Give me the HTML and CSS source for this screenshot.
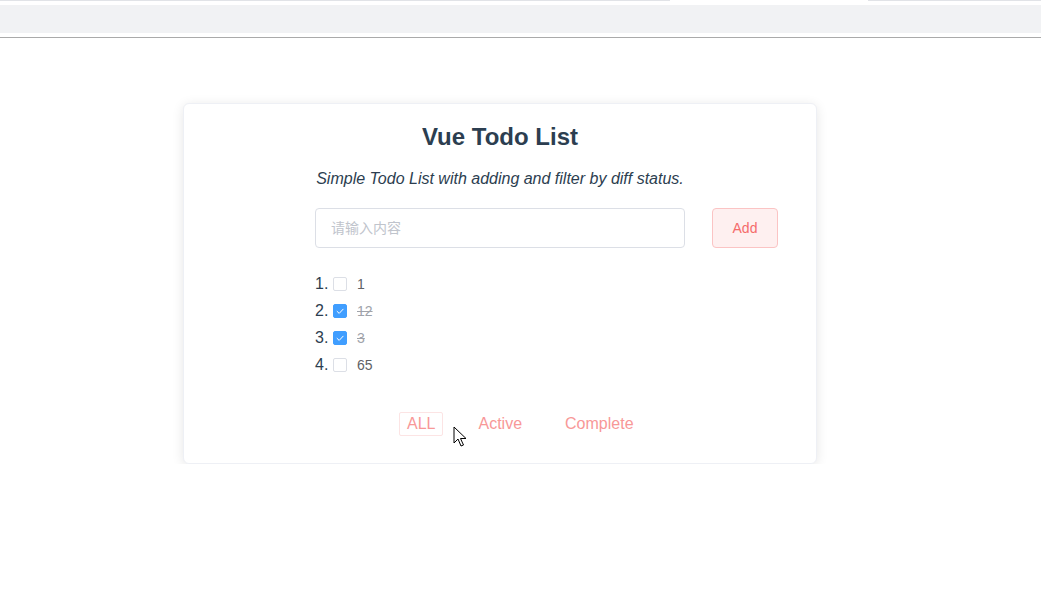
FILE: index.html
```html
<!DOCTYPE html>
<html lang="en">
<head>
<meta charset="utf-8">
<title>Vue Todo List</title>
<link rel="stylesheet" href="styles.css">
</head>
<body>
<div class="chrome">
  <div class="tabs"><div class="tab-gap"></div></div>
  <div class="bar"></div>
  <div class="sep"></div>
</div>
<main class="page">
  <section class="card">
    <h2 class="title">Vue Todo List</h2>
    <p class="subtitle">Simple Todo List with adding and filter by diff status.</p>
    <div class="inner">
      <div class="add-row">
        <input class="todo-input" type="text" placeholder="请输入内容">
        <button class="add-btn">Add</button>
      </div>
      <ol class="todos">
        <li class="todo"><span class="num">1.</span><span class="box"></span><span class="label">1</span></li>
        <li class="todo done"><span class="num">2.</span><span class="box checked"><svg viewBox="0 0 14 14" width="14" height="14"><path d="M3.8 7.1l2.4 2.3L10.4 4.9" fill="none" stroke="#fff" stroke-width="1"/></svg></span><span class="label">12</span></li>
        <li class="todo done"><span class="num">3.</span><span class="box checked"><svg viewBox="0 0 14 14" width="14" height="14"><path d="M3.8 7.1l2.4 2.3L10.4 4.9" fill="none" stroke="#fff" stroke-width="1"/></svg></span><span class="label">3</span></li>
        <li class="todo"><span class="num">4.</span><span class="box"></span><span class="label">65</span></li>
      </ol>
      <div class="filters">
        <button class="filter active-filter">ALL</button>
        <button class="filter">Active</button>
        <button class="filter">Complete</button>
        <svg class="cursor" width="14" height="22" viewBox="0 0 14 22"><path d="M1 1v16l4-4 3 7 2.5-1-3-6.5h5.5z" fill="#fff" stroke="#000" stroke-width="1" stroke-linejoin="round"/></svg>
      </div>
    </div>
  </section>
</main>
</body>
</html>
```

FILE: styles.css
```css
html, body {
  margin: 0;
  padding: 0;
  background: #fff;
  font-family: "Liberation Sans", Arial, "Noto Sans CJK SC", sans-serif;
}

.chrome .tabs {
  height: 5px;
  background: #fff;
  position: relative;
}
.chrome .tabs::before {
  content: "";
  display: block;
  height: 1px;
  background: #e1e3e7;
}
.chrome .tab-gap {
  position: absolute;
  top: 0;
  left: 670px;
  width: 198px;
  height: 2px;
  background: #fff;
}
.chrome .bar {
  height: 28px;
  background: #f1f2f4;
}
.chrome .sep {
  height: 4px;
  background: #fff;
  border-bottom: 1px solid #aaaaaa;
}

.page {
  padding-top: 65px;
  display: flex;
  justify-content: center;
}

.card {
  width: 632px;
  margin-left: -41px;
  background: #fff;
  border: 1px solid #eef0f5;
  border-radius: 6px;
  box-shadow: 0 2px 12px 0 rgba(0, 0, 0, 0.1);
  padding: 19px 0 27px;
  box-sizing: content-box;
  color: #2c3e50;
}

.title {
  margin: 0;
  text-align: center;
  font-size: 24px;
  line-height: 28px;
  font-weight: bold;
}

.subtitle {
  margin: 19px 0 0;
  text-align: center;
  font-size: 16px;
  line-height: 18px;
  font-style: italic;
}

.inner {
  width: 370px;
  margin: 0 auto;
}

.add-row {
  margin-top: 20px;
  display: flex;
  align-items: center;
}

.todo-input {
  flex: 0 0 370px;
  height: 40px;
  box-sizing: border-box;
  border: 1px solid #dcdfe6;
  border-radius: 4px;
  padding: 0 15px;
  font-size: 14px;
  font-family: "Liberation Sans", Arial, "Noto Sans CJK SC", sans-serif;
  color: #606266;
  outline: none;
}
.todo-input::placeholder {
  color: #c0c4cc;
}

.add-btn {
  flex: 0 0 66px;
  margin-left: 27px;
  height: 40px;
  padding: 0;
  box-sizing: border-box;
  background: #fef0f0;
  border: 1px solid #fbc4c4;
  border-radius: 4px;
  color: #f56c6c;
  font-size: 14px;
  font-family: "Liberation Sans", Arial, sans-serif;
}

.todos {
  list-style: none;
  margin: 22px 0 0;
  padding: 0;
}

.todo {
  display: flex;
  align-items: center;
  height: 27px;
}

.num {
  font-size: 16px;
  color: #2c3e50;
  width: 18px;
}

.box {
  width: 14px;
  height: 14px;
  box-sizing: border-box;
  border: 1px solid #dcdfe6;
  border-radius: 2px;
  background: #fff;
  display: flex;
}
.box.checked {
  background: #409eff;
  border-color: #409eff;
}
.box.checked svg {
  margin: -1px;
}

.label {
  margin-left: 10px;
  font-size: 14px;
  color: #606266;
}
.done .label {
  color: #a0a3aa;
  text-decoration: line-through;
}

.filters {
  margin-top: 34px;
  display: flex;
  align-items: center;
  gap: 27px;
  padding-left: 84px;
  position: relative;
}

.filter {
  height: 24px;
  padding: 0 7px;
  border: 1px solid transparent;
  border-radius: 2px;
  background: transparent;
  color: #f89898;
  font-size: 16px;
  font-family: "Liberation Sans", Arial, sans-serif;
}
.filter.active-filter {
  border-color: #fce4e4;
}

.cursor {
  position: absolute;
  left: 138px;
  top: 14px;
}
```
